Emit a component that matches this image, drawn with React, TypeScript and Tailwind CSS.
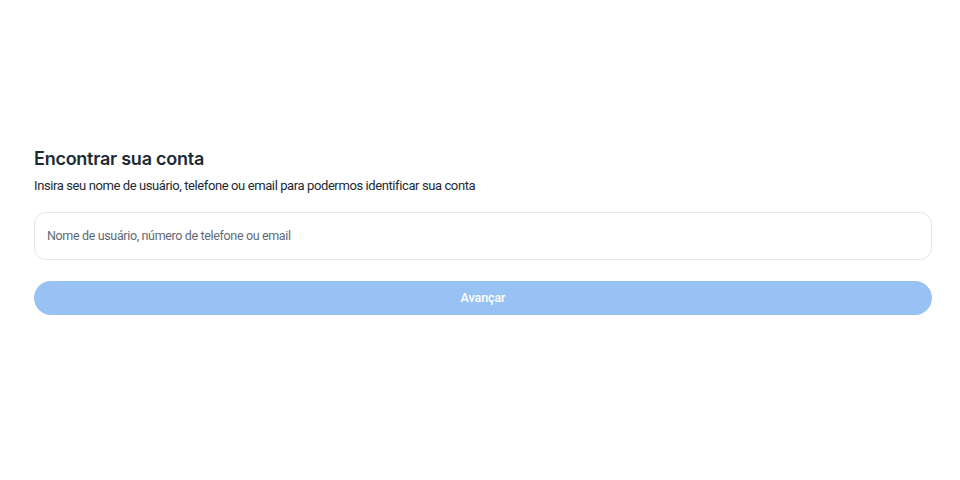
import React from "react";

export default function App() {
  return (
    <div className="w-[960px] h-[480px] bg-white" style={{ fontFamily: "Roboto, 'Noto Sans', sans-serif" }}>
      <div className="px-[34px] pt-[147px] pr-[28px]">
        <h1 className="text-[18px] leading-[24px] font-semibold text-[#1c2b33] tracking-[-0.25px]" style={{ fontFamily: "Inter, sans-serif" }}>Encontrar sua conta</h1>
        <p className="mt-[6px] text-[13px] leading-[18px] text-[#1c2b33] tracking-[-0.4px]">
          Insira seu nome de usuário, telefone ou email para podermos identificar sua conta
        </p>
        <div className="mt-[17px] h-[48px] rounded-[12px] border border-[#e3e6ea] flex items-center px-[12px]">
          <input
            className="w-full outline-none text-[12.5px] tracking-[-0.35px] text-[#1c2b33] placeholder:text-[#5f6a75] bg-transparent"
            placeholder="Nome de usuário, número de telefone ou email"
          />
        </div>
        <button className="mt-[21px] w-full h-[34px] rounded-full bg-[#99c2f4] text-white text-[12.5px] font-medium tracking-[-0.1px]">
          Avançar
        </button>
      </div>
    </div>
  );
}
